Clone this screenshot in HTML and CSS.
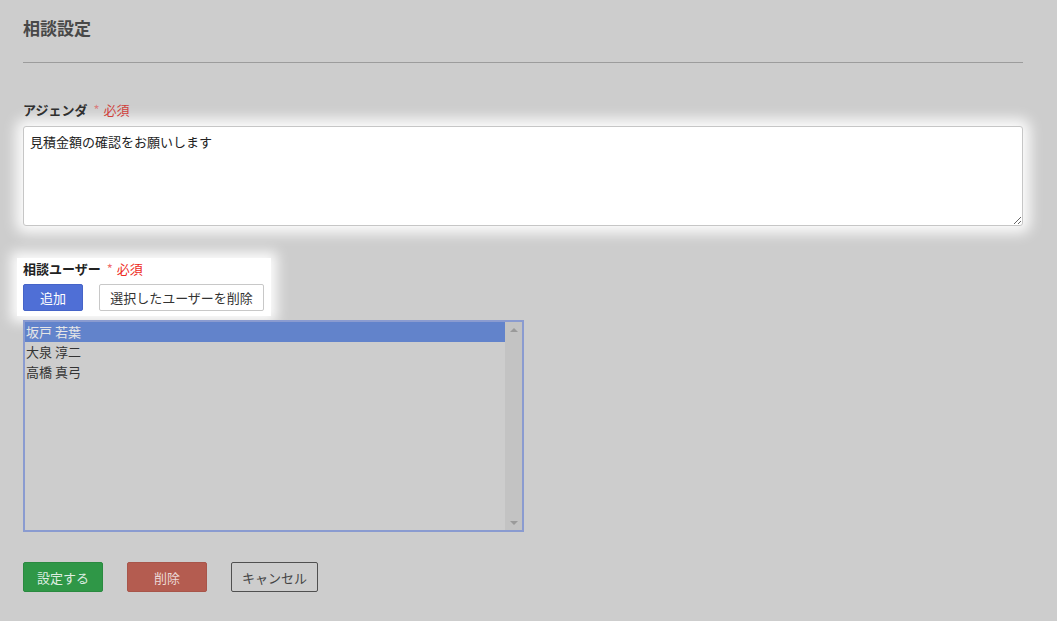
FILE: index.html
```html
<!DOCTYPE html>
<html lang="ja">
<head>
<meta charset="utf-8">
<title>相談設定</title>
<link rel="stylesheet" href="styles.css">
</head>
<body>
<div class="page">
  <h1 class="title">相談設定</h1>
  <hr class="rule">
  <div class="field-label">アジェンダ<span class="star">*</span><span class="req">必須</span></div>
  <textarea class="agenda" readonly>見積金額の確認をお願いします</textarea>

  <div class="spot">
    <div class="field-label">相談ユーザー<span class="star">*</span><span class="req">必須</span></div>
    <div class="btn-row">
      <button class="btn btn-add">追加</button>
      <button class="btn btn-outline">選択したユーザーを削除</button>
    </div>
  </div>

  <div class="listbox">
    <div class="list-items">
      <div class="item selected">坂戸 若葉</div>
      <div class="item">大泉 淳二</div>
      <div class="item">高橋 真弓</div>
    </div>
    <div class="scrollbar">
      <span class="arrow up"></span>
      <span class="arrow down"></span>
    </div>
  </div>

  <div class="actions">
    <button class="btn btn-save">設定する</button>
    <button class="btn btn-delete">削除</button>
    <button class="btn btn-cancel">キャンセル</button>
  </div>
</div>
</body>
</html>
```

FILE: styles.css
```css
html, body {
  margin: 0;
  padding: 0;
  background: #cdcdcd;
  font-family: "Noto Sans CJK JP", "Noto Sans", sans-serif;
  color: #333;
}

.page {
  width: 1000px;
  padding: 18px 0 0 23px;
}

.title {
  margin: 0;
  font-size: 17px;
  line-height: 20px;
  font-weight: bold;
  color: #484848;
}

.rule {
  margin: 24px 0 0;
  border: 0;
  border-top: 1px solid #9c9c9c;
  height: 0;
}

.field-label {
  font-size: 13px;
  line-height: 18px;
  font-weight: bold;
  color: #2f2f2f;
}

.page > .field-label {
  margin-top: 38px;
}

.star {
  font-weight: normal;
  font-size: 13px;
  color: #d98080;
  margin-left: 6px;
}

.req {
  font-weight: normal;
  font-size: 13px;
  color: #d0403a;
  margin-left: 4px;
}

.agenda {
  display: block;
  box-sizing: border-box;
  width: 1000px;
  height: 100px;
  margin-top: 7px;
  padding: 6px 6px;
  border: 1px solid #c6c6c6;
  border-radius: 3px;
  background: #fff;
  font-family: "Noto Sans CJK JP", "Noto Sans", sans-serif;
  font-size: 13px;
  line-height: 18px;
  color: #222;
  box-shadow: 0 0 14px 7px rgba(255, 255, 255, 0.95);
  outline: none;
}

.spot {
  width: fit-content;
  margin: 32px 0 0 -6px;
  padding: 2px 7px 5px 6px;
  background: #fff;
  box-shadow: 0 0 12px 6px rgba(255, 255, 255, 0.95);
}

.spot .star {
  color: #f07070;
}

.spot .req {
  color: #ee2a22;
}

.spot .field-label {
  color: #222;
}

.btn-row {
  display: flex;
  gap: 16px;
  margin-top: 6px;
}

.btn {
  box-sizing: border-box;
  font-family: "Noto Sans CJK JP", "Noto Sans", sans-serif;
  font-size: 13px;
  border-radius: 2px;
  padding: 0;
  cursor: pointer;
}

.btn-add {
  width: 60px;
  height: 27px;
  background: #4f6fd6;
  border: 1px solid #4664c8;
  color: #fff;
}

.btn-outline {
  width: 165px;
  height: 27px;
  background: #fff;
  border: 1px solid #c8c8c8;
  color: #333;
}

.listbox {
  display: flex;
  box-sizing: border-box;
  width: 501px;
  height: 212px;
  margin-top: 4px;
  border: 2px solid #8a9bd0;
  background: #cdcdcd;
}

.list-items {
  flex: 1;
}

.item {
  height: 20px;
  line-height: 20px;
  padding-left: 1px;
  font-size: 13px;
  color: #333;
}

.item.selected {
  background: #6283cb;
  color: #e6e6e6;
}

.scrollbar {
  width: 17px;
  background: #c3c3c3;
  display: flex;
  flex-direction: column;
  justify-content: space-between;
  align-items: center;
  padding: 6px 0 5px;
  box-sizing: border-box;
}

.arrow {
  width: 0;
  height: 0;
  border-left: 4px solid transparent;
  border-right: 4px solid transparent;
}

.arrow.up {
  border-bottom: 4px solid #9a9a9a;
}

.arrow.down {
  border-top: 4px solid #9a9a9a;
}

.actions {
  display: flex;
  gap: 24px;
  margin-top: 30px;
}

.actions .btn {
  height: 30px;
}

.btn-save {
  width: 80px;
  background: #2f9747;
  border: 1px solid #2a8a40;
  color: #dfeee2;
}

.btn-delete {
  width: 80px;
  background: #b45c50;
  border: 1px solid #a8554a;
  color: #ecd9d6;
}

.btn-cancel {
  width: 87px;
  background: transparent;
  border: 1px solid #505050;
  color: #444;
}
```
